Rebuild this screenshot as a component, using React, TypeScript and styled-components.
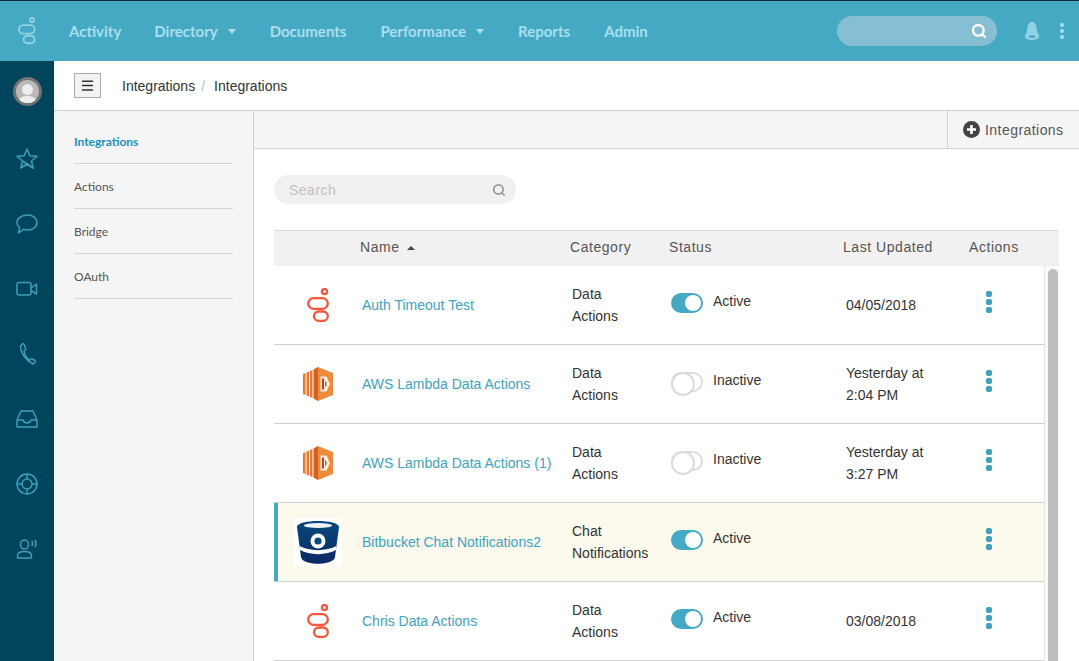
import React from 'react';
import styled, { createGlobalStyle } from 'styled-components';
import { Search as SearchIcon, Menu } from 'lucide-react';

const GlobalStyle = createGlobalStyle`
  html, body {
    margin: 0;
    height: 661px;
    overflow: hidden;
    background: #fff;
    font-family: "Liberation Sans", Arial, sans-serif;
  }
  * { box-sizing: border-box; }
`;

const Page = styled.div`
  width: 1079px;
  height: 661px;
  display: flex;
  flex-direction: column;
  overflow: hidden;
`;
const TopBar = styled.header`
  height: 61px;
  flex: none;
  display: flex;
  align-items: center;
  background: #46a9c4;
  border-top: 1px solid #0c2a33;
`;
const LogoSlot = styled.div`
  width: 54px;
  display: flex;
  justify-content: center;
`;
const NavItem = styled.a<{ $gap?: number }>`
  display: flex;
  align-items: center;
  gap: 10px;
  margin-left: ${p => p.$gap ?? 34}px;
  font: 700 15px Lato, sans-serif;
  color: #a9dfee;
`;
const Caret = styled.span`
  width: 0;
  height: 0;
  border-left: 4.5px solid transparent;
  border-right: 4.5px solid transparent;
  border-top: 5px solid #a9dfee;
`;
const TopRight = styled.div`
  margin-left: auto;
  display: flex;
  align-items: center;
  padding-right: 15px;
`;
const TopSearch = styled.div`
  width: 160px;
  height: 30px;
  border-radius: 15px;
  background: #86bfd3;
  display: flex;
  align-items: center;
  justify-content: flex-end;
  padding-right: 10px;
  color: #fff;
`;
const Bell = styled.svg`
  margin-left: 27px;
`;
const KebabTop = styled.div`
  margin-left: 20px;
  display: flex;
  flex-direction: column;
  gap: 2px;
  span {
    width: 4px;
    height: 4px;
    border-radius: 50%;
    background: #a9dfee;
  }
`;
const Body = styled.div`
  flex: 1;
  display: flex;
  min-height: 0;
`;
const Rail = styled.nav`
  width: 54px;
  flex: none;
  background: #00455c;
  display: flex;
  flex-direction: column;
  align-items: center;
  padding-top: 16px;
  color: #3f9db8;
`;
const Avatar = styled.div`
  width: 29px;
  height: 29px;
  border-radius: 50%;
  background: #b9b9b9;
  border: 3px solid #737373;
  position: relative;
  overflow: hidden;
  margin-bottom: 40px;
  &::before {
    content: '';
    position: absolute;
    left: 6px;
    top: 4px;
    width: 11px;
    height: 11px;
    border-radius: 50%;
    background: #eee;
  }
  &::after {
    content: '';
    position: absolute;
    left: 3px;
    top: 16px;
    width: 17px;
    height: 10px;
    border-radius: 50%;
    background: #eee;
  }
`;
const RailSlot = styled.div`
  height: 65px;
  display: flex;
  align-items: flex-start;
  justify-content: center;
  padding-top: 2px;
`;
const Main = styled.div`
  flex: 1;
  min-width: 0;
  display: flex;
  flex-direction: column;
`;
const Crumbs = styled.div`
  height: 50px;
  flex: none;
  display: flex;
  align-items: center;
  padding-left: 20px;
  border-bottom: 1px solid #cfcfcf;
  font-size: 14px;
  color: #333;
`;
const MenuButton = styled.div`
  width: 27px;
  height: 25px;
  border: 1px solid #aaa;
  background: #f3f3f3;
  display: flex;
  align-items: center;
  justify-content: center;
  margin-right: 21px;
  color: #333;
`;
const Slash = styled.span`
  color: #bbb;
  margin: 0 9px 0 6px;
`;
const Content = styled.div`
  flex: 1;
  display: flex;
  min-height: 0;
`;
const SideNav = styled.aside`
  width: 200px;
  flex: none;
  background: #f5f5f5;
  border-right: 1px solid #cfcfcf;
  padding: 8px 20px 0;
`;
const SideItem = styled.div<{ $active?: boolean }>`
  height: 45px;
  display: flex;
  align-items: center;
  border-bottom: 1px solid #d4d4d4;
  font: ${p => (p.$active ? 700 : 400)} 12px Lato, sans-serif;
  color: ${p => (p.$active ? '#1a8fbd' : '#555')};
`;
const Panel = styled.section`
  flex: 1;
  min-width: 0;
  display: flex;
  flex-direction: column;
`;
const ActionStrip = styled.div`
  height: 38px;
  flex: none;
  background: #f5f5f5;
  border-bottom: 1px solid #d4d4d4;
  display: flex;
  justify-content: flex-end;
`;
const AddButton = styled.div`
  width: 132px;
  border-left: 1px solid #d4d4d4;
  display: flex;
  align-items: center;
  gap: 5px;
  padding-left: 15px;
  font-size: 14px;
  letter-spacing: 0.45px;
  color: #555;
`;
const PanelBody = styled.div`
  flex: 1;
  padding: 26px 20px 0;
  min-height: 0;
`;
const SearchBox = styled.div`
  width: 242px;
  height: 29px;
  border-radius: 15px;
  background: #f0f0f0;
  display: flex;
  align-items: center;
  justify-content: space-between;
  padding: 0 10px 0 15px;
  font-size: 14px;
  letter-spacing: 0.5px;
  color: #c2c2c2;
`;
const HeadRow = styled.div`
  margin-top: 26px;
  height: 36px;
  width: 785px;
  padding-bottom: 4px;
  background: #f1f1f1;
  border-top: 1px solid #ddd;
  display: grid;
  grid-template-columns: 86px 210px 99px 174px 126px 1fr;
  align-items: center;
  font-size: 14px;
  letter-spacing: 0.55px;
  color: #555;
`;
const SortCaret = styled.span`
  display: inline-block;
  margin-left: 7px;
  vertical-align: 2px;
  border-left: 4px solid transparent;
  border-right: 4px solid transparent;
  border-bottom: 4px solid #444;
`;
const TableWrap = styled.div`
  display: flex;
  width: 785px;
`;
const Rows = styled.div`
  width: 770px;
  flex: none;
`;
const Row = styled.div<{ $selected?: boolean }>`
  height: 79px;
  display: grid;
  grid-template-columns: 88px 210px 99px 175px 124px 1fr;
  align-items: center;
  border-bottom: 1px solid #cfcfcf;
  font-size: 14px;
  line-height: 22px;
  color: #333;
  background: ${p => (p.$selected ? '#fcfaed' : '#fff')};
  ${p => p.$selected && 'border-top: 1px solid #cfcfcf; margin-top: -1px; height: 80px; box-shadow: inset 4px 0 0 #46a9c4;'}
`;
const LogoCell = styled.div`
  display: flex;
  justify-content: center;
`;
const NameLink = styled.a`
  color: #41a2c0;
`;
const StatusCell = styled.div`
  display: flex;
  align-items: center;
  gap: 10px;
  padding-bottom: 4px;
`;
const StatusLabel = styled.span`
  padding-bottom: 4px;
`;
const Toggle = styled.span<{ $on: boolean }>`
  width: 32px;
  height: 20px;
  border-radius: 10px;
  position: relative;
  background: ${p => (p.$on ? '#46a9c4' : '#fff')};
  border: ${p => (p.$on ? 'none' : '2px solid #dcdcdc')};
  &::after {
    content: '';
    position: absolute;
    width: ${p => (p.$on ? 16 : 20)}px;
    height: ${p => (p.$on ? 16 : 20)}px;
    top: ${p => (p.$on ? 2 : -2)}px;
    left: ${p => (p.$on ? 14 : -2)}px;
    border-radius: 50%;
    background: #fff;
    border: ${p => (p.$on ? 'none' : '2px solid #dcdcdc')};
  }
`;
const Dots = styled.div`
  display: flex;
  flex-direction: column;
  gap: 2px;
  padding: 0 0 6px 16px;
  span {
    width: 6px;
    height: 6px;
    border-radius: 2px;
    background: #3f9fbe;
  }
`;
const ScrollTrack = styled.div`
  flex: 1;
  border-left: 1px solid #e6e6e6;
  padding: 3px 0 0 3px;
  background: #fafafa;
`;
const ScrollThumb = styled.div`
  width: 10px;
  height: 420px;
  border-radius: 5px;
  background: #bdbdbd;
`;

const GenesysMark = ({ color, scale = 1 }: { color: string; scale?: number }) => (
  <svg width={22 * scale} height={34 * scale} viewBox="0 0 22 34" fill="none" stroke={color} strokeWidth={2.3}>
    <circle cx="17.5" cy="3.6" r="2.6" />
    <rect x="1.2" y="10.2" width="19.600" height="10.600" rx="5.300" />
    <rect x="7" y="23.500" width="13.800" height="9.300" rx="4.650" />
  </svg>
);

const LambdaMark = () => (
  <svg width="30" height="34" viewBox="0 0 30 34">
    <path d="M0 7l2.500-1v22l-2.500-1z" fill="#e57a2f" />
    <path d="M3.500 5.500l2.500-1v25l-2.500-1z" fill="#e57a2f" />
    <path d="M7 4l2.500-1v28l-2.500-1z" fill="#e57a2f" />
    <path d="M10.500 2.500L15 0v34l-4.500-2.500z" fill="#d2601f" />
    <path d="M15 0l15 6v22l-15 6z" fill="#ee8a3c" />
    <path d="M17.500 9.500h6l3.500 7.500-3.500 7.500h-6z" fill="#fbeee2" />
    <path d="M19 11.500h2v11h-2z" fill="#a8501c" />
    <path d="M22 13l2 4-2 4z" fill="#c96a2a" />
  </svg>
);

const BitbucketMark = () => (
  <svg width="48" height="48" viewBox="0 0 48 48">
    <defs>
      <linearGradient id="bb" x1="0" y1="0" x2="0" y2="1">
        <stop offset="0" stopColor="#07497c" />
        <stop offset="1" stopColor="#0b2a66" />
      </linearGradient>
    </defs>
    <rect width="48" height="48" fill="#fff" />
    <path d="M3 9C3 1 45 1 45 9l-4 30c-.5 9-33.500 9-34 0z" fill="url(#bb)" />
    <ellipse cx="24" cy="7.500" rx="14" ry="2.600" fill="#eef2f6" />
    <path d="M5.600 28C15 33.500 33 33.500 42.400 28l-.5 4C33 37.500 15 37.500 6.100 32z" fill="#fff" />
    <circle cx="24" cy="23" r="7.500" fill="#fff" />
    <circle cx="24" cy="23" r="3.600" fill="#0b4a80" />
  </svg>
);

const RailIcon = ({ children }: { children: React.ReactNode }) => (
  <svg width="22" height="22" viewBox="0 0 22 22" fill="none" stroke="currentColor" strokeWidth="1.5" strokeLinejoin="round">
    {children}
  </svg>
);

const rows = [
  { logo: 'genesys', name: 'Auth Timeout Test', cat: ['Data', 'Actions'], on: true, date: ['04/05/2018'] },
  { logo: 'lambda', name: 'AWS Lambda Data Actions', cat: ['Data', 'Actions'], on: false, date: ['Yesterday at', '2:04 PM'] },
  { logo: 'lambda', name: 'AWS Lambda Data Actions (1)', cat: ['Data', 'Actions'], on: false, date: ['Yesterday at', '3:27 PM'] },
  { logo: 'bitbucket', name: 'Bitbucket Chat Notifications2', cat: ['Chat', 'Notifications'], on: true, date: [], selected: true },
  { logo: 'genesys', name: 'Chris Data Actions', cat: ['Data', 'Actions'], on: true, date: ['03/08/2018'] },
];

export default function App() {
  return (
    <Page>
      <GlobalStyle />
      <TopBar>
        <LogoSlot>
          <GenesysMark color="#8fd2e4" scale={0.8} />
        </LogoSlot>
        <NavItem $gap={15}>Activity</NavItem>
        <NavItem $gap={33}>Directory <Caret /></NavItem>
        <NavItem>Documents</NavItem>
        <NavItem>Performance <Caret /></NavItem>
        <NavItem>Reports</NavItem>
        <NavItem>Admin</NavItem>
        <TopRight>
          <TopSearch>
            <SearchIcon size={16} strokeWidth={3.4} />
          </TopSearch>
          <Bell width="16" height="18" viewBox="0 0 16 18">
            <path d="M8 0c3 0 4.300 2.500 4.500 6 .2 3.500 1.500 5.500 2.500 7.500 1 2.500-3 4.500-7 4.500s-8-2-7-4.500c1-2 2.300-4 2.500-7.500C3.700 2.500 5 0 8 0z" fill="#8fd2e4" />
            <ellipse cx="8" cy="14.600" rx="3.500" ry="1.400" fill="#46a9c4" />
          </Bell>
          <KebabTop><span /><span /><span /></KebabTop>
        </TopRight>
      </TopBar>
      <Body>
        <Rail>
          <Avatar />
          <RailSlot>
            <RailIcon>
              <path d="M11 1l2.800 6.700 7.200.6-5.500 4.700 1.700 7L11 16l-6.200 4 1.700-7L1 8.300l7.200-.6z" />
              <path d="M6.500 13l10.700 7" />
            </RailIcon>
          </RailSlot>
          <RailSlot>
            <RailIcon>
              <path d="M11.500 2C17 2 21 5 21 9.500S17 17 11.500 17c-1.500 0-2.800-.2-4-.7L2.500 20l1.200-5.200C2 13.500 1 11.600 1 9.500 1 5 6 2 11.500 2z" />
            </RailIcon>
          </RailSlot>
          <RailSlot>
            <RailIcon>
              <rect x="1" y="4.500" width="14" height="12.500" rx="2" />
              <path d="M15 10l5.500-4v10L15 12.500" />
            </RailIcon>
          </RailSlot>
          <RailSlot>
            <RailIcon>
              <path d="M6.500 1L4.500 3c-.5 6 5 14 12.500 18l2-1.500c.8-.8.5-1.500-.2-2l-2.500-1.500c-.7-.4-1.300-.3-1.800.3l-.8.8C10.500 15 8.500 11 8 8l1-.6c.6-.4.8-1 .6-1.600L8.200 1.500c-.3-.8-1-1-1.700-.5z" />
            </RailIcon>
          </RailSlot>
          <RailSlot>
            <RailIcon>
              <path d="M5 3h12l4 9v7H1v-7z" />
              <path d="M1 12h6c.5 2 2 3 4 3s3.500-1 4-3h6" />
            </RailIcon>
          </RailSlot>
          <RailSlot>
            <RailIcon>
              <circle cx="11" cy="11" r="10" />
              <circle cx="11" cy="11" r="5" />
              <path d="M11 1v5M11 16v5M1 11h5M16 11h5" />
            </RailIcon>
          </RailSlot>
          <RailSlot>
            <RailIcon>
              <ellipse cx="8.500" cy="6.500" rx="4" ry="4.500" />
              <path d="M1.500 20v-2c0-3 3-4.500 7-4.500s7 1.500 7 4.500v2z" />
              <path d="M16 3c.8 1.500.8 3.500 0 5M19 2c1.200 2 1.200 5 0 7" />
            </RailIcon>
          </RailSlot>
        </Rail>
        <Main>
          <Crumbs>
            <MenuButton><Menu size={15} strokeWidth={2.4} /></MenuButton>
            Integrations<Slash>/</Slash>Integrations
          </Crumbs>
          <Content>
            <SideNav>
              <SideItem $active>Integrations</SideItem>
              <SideItem>Actions</SideItem>
              <SideItem>Bridge</SideItem>
              <SideItem>OAuth</SideItem>
            </SideNav>
            <Panel>
              <ActionStrip>
                <AddButton>
                  <svg width="17" height="17" viewBox="0 0 17 17">
                    <circle cx="8.500" cy="8.500" r="8.500" fill="#444" />
                    <path d="M8.500 4v9M4 8.500h9" stroke="#fff" strokeWidth="2.600" />
                  </svg>
                  Integrations
                </AddButton>
              </ActionStrip>
              <PanelBody>
                <SearchBox>Search<SearchIcon size={14} strokeWidth={3} color="#999" /></SearchBox>
                <HeadRow>
                  <span />
                  <span>Name<SortCaret /></span>
                  <span>Category</span>
                  <span>Status</span>
                  <span>Last Updated</span>
                  <span>Actions</span>
                </HeadRow>
                <TableWrap>
                  <Rows>
                    {rows.map(r => (
                      <Row key={r.name} $selected={r.selected}>
                        <LogoCell>
                          {r.logo === 'genesys' && <GenesysMark color="#f4573c" />}
                          {r.logo === 'lambda' && <LambdaMark />}
                          {r.logo === 'bitbucket' && <BitbucketMark />}
                        </LogoCell>
                        <NameLink>{r.name}</NameLink>
                        <div>{r.cat.map(c => <div key={c}>{c}</div>)}</div>
                        <StatusCell>
                          <Toggle $on={r.on} />
                          <StatusLabel>{r.on ? 'Active' : 'Inactive'}</StatusLabel>
                        </StatusCell>
                        <div>{r.date.map(d => <div key={d}>{d}</div>)}</div>
                        <Dots><span /><span /><span /></Dots>
                      </Row>
                    ))}
                  </Rows>
                  <ScrollTrack><ScrollThumb /></ScrollTrack>
                </TableWrap>
              </PanelBody>
            </Panel>
          </Content>
        </Main>
      </Body>
    </Page>
  );
}
